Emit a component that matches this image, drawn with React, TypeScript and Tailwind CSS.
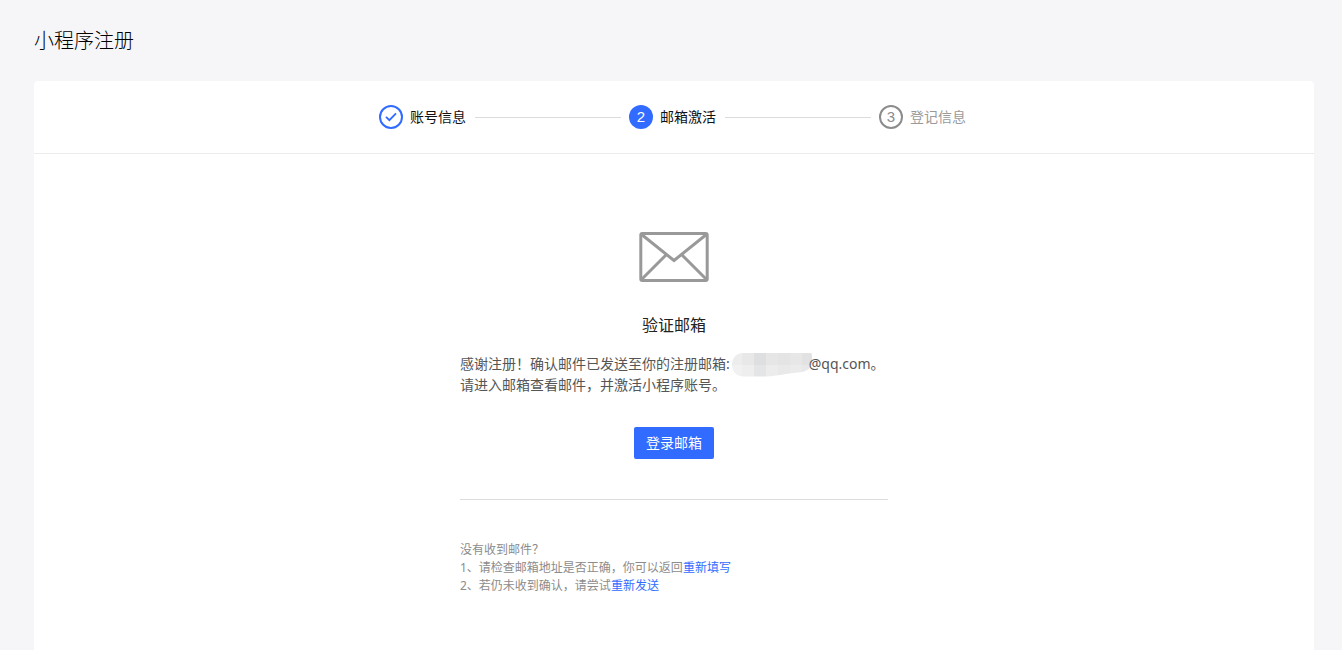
import React from 'react';

type StepState = 'done' | 'current' | 'todo';

interface Step {
  label: string;
  state: StepState;
}

const steps: Step[] = [
  { label: '账号信息', state: 'done' },
  { label: '邮箱激活', state: 'current' },
  { label: '登记信息', state: 'todo' },
];

const badgeStyles: Record<StepState, string> = {
  done: 'border-2 border-[#326bff] text-[#326bff]',
  current: 'bg-[#326bff] text-white',
  todo: 'border-2 border-[#8c8c8c] text-[#8c8c8c]',
};

function CheckIcon() {
  return (
    <svg width="12" height="10" viewBox="0 0 12 10" fill="none" aria-hidden="true">
      <path d="M1 4.8 4.4 8.2 11 1.4" stroke="currentColor" strokeWidth="1.8" />
    </svg>
  );
}

function StepBadge({ state, index }: { state: StepState; index: number }) {
  return (
    <span
      className={`flex size-6 shrink-0 items-center justify-center rounded-full pb-px font-['Liberation_Sans',sans-serif] text-[15px] leading-none ${badgeStyles[state]}`}
    >
      {state === 'done' ? <CheckIcon /> : index + 1}
    </span>
  );
}

function Stepper() {
  return (
    <ol className="mx-auto flex h-[72px] w-full max-w-[590px] items-center gap-2 pr-0.5">
      {steps.map((step, index) => (
        <React.Fragment key={step.label}>
          {index > 0 && <li aria-hidden="true" className="h-px flex-1 bg-[#dcdcdc]" />}
          <li className="flex items-center gap-[7px]">
            <StepBadge state={step.state} index={index} />
            <span
              className={`w-[57px] text-sm ${step.state === 'todo' ? 'text-[#9a9a9a]' : 'text-[#111]'}`}
            >
              {step.label}
            </span>
          </li>
        </React.Fragment>
      ))}
    </ol>
  );
}

function EnvelopeIcon() {
  return (
    <svg width="70" height="50" viewBox="0 0 70 50" fill="none" stroke="#999" strokeWidth="3" aria-hidden="true">
      <rect x="1.8" y="1.5" width="66.400" height="47" rx="1.5" />
      <path d="M2 2 35 28.5 68 2" />
      <path d="M2.5 47.5 27.5 22.5M67.5 47.5 42.5 22.5" />
    </svg>
  );
}

const mosaicTop = ['#ededed', '#e8e8e9', '#dedfe0', '#e6e6e7', '#e4e4e5', '#e7e7e7', '#e2e2e3'];
const mosaicBottom = ['#f1f1f1', '#eeeeef', '#e4e5e6', '#ececec', '#e9e9ea', '#ebebeb', '#e8e8e8'];

function MaskedName() {
  return (
    <span className="relative inline-block h-4 w-[79px] align-middle">
      <svg className="absolute -top-1 left-0.5" width="80" height="24" viewBox="0 0 80 24" aria-hidden="true">
        <clipPath id="mask-shape">
          <path d="M11 0H79Q80 0 80 3V10C79 16 74 19 66 19.5C54 20.5 46 23 34 23.5H12C4 23.5 0 18 0 12C0 5 4 0 11 0Z" />
        </clipPath>
        <g clipPath="url(#mask-shape)">
          {mosaicTop.map((fill, i) => (
            <rect key={`t${i}`} x={i * 12 - 2} y="0" width="12" height="12" fill={fill} />
          ))}
          {mosaicBottom.map((fill, i) => (
            <rect key={`b${i}`} x={i * 12 - 2} y="12" width="12" height="12" fill={fill} />
          ))}
        </g>
      </svg>
    </span>
  );
}

export default function App() {
  return (
    <div className="flex min-h-screen flex-col bg-[#f6f6f8] pr-7 pl-[34px] font-['Noto_Sans','Noto_Sans_CJK_SC',sans-serif] text-[#222]">
      <h1 className="pt-[27px] pb-[26px] text-xl leading-7 font-light text-black">小程序注册</h1>
      <main className="flex-1 rounded-t bg-white">
        <div className="border-b border-[#ececec]">
          <Stepper />
        </div>
        <div className="mx-auto flex w-full max-w-[428px] flex-col items-center pt-[78px] pb-12">
          <EnvelopeIcon />
          <h2 className="mt-[31px] text-base leading-6">验证邮箱</h2>
          <p className="mt-4 w-full text-sm leading-[21px] text-[#555]">
            感谢注册！确认邮件已发送至你的注册邮箱:
            <MaskedName />
            <span className="relative">@qq.com。</span>
            <br />
            请进入邮箱查看邮件，并激活小程序账号。
          </p>
          <button
            type="button"
            className="mt-8 h-8 w-20 rounded-xs bg-[#326bff] text-sm text-white"
          >
            登录邮箱
          </button>
          <hr className="mt-10 w-full border-[#dcdcdc]" />
          <div className="mt-[41px] w-full text-xs leading-[18px] text-[#8c8c8c]">
            <p>没有收到邮件？</p>
            <p>
              1、请检查邮箱地址是否正确，你可以返回
              <a href="#refill" className="text-[#326bff]">重新填写</a>
            </p>
            <p>
              2、若仍未收到确认，请尝试
              <a href="#resend" className="text-[#326bff]">重新发送</a>
            </p>
          </div>
        </div>
      </main>
    </div>
  );
}
